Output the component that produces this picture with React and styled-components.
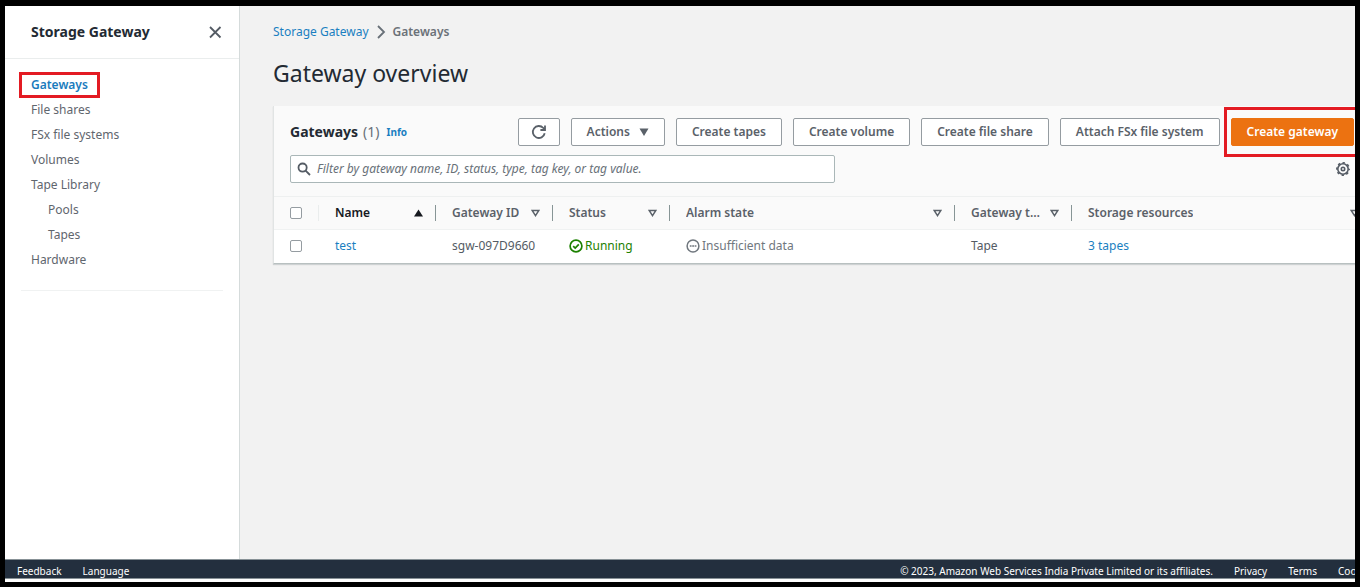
import React from "react";
import styled, { createGlobalStyle, css } from "styled-components";

const GlobalStyle = createGlobalStyle`
  *, *::before, *::after { box-sizing: border-box; }
  body {
    margin: 0;
    background: #000;
    color: #545b64;
    font-family: "Noto Sans", "Open Sans", sans-serif;
    font-size: 12px;
    line-height: 16px;
  }
  button, input { font: inherit; }
`;

const Frame = styled.div`
  min-height: 100vh;
  display: flex;
  flex-direction: column;
  border: 5px solid #000;
  border-top-width: 6px;
  background: #fff;
  overflow: hidden;
`;

const Body = styled.div`
  flex: 1;
  display: flex;
`;

const Sidebar = styled.nav`
  flex: 0 0 235px;
  background: #fff;
  border-right: 1px solid #d5dbdb;
`;

const SidebarHeader = styled.div`
  display: flex;
  align-items: center;
  justify-content: space-between;
  height: 53px;
  padding: 0 17px 0 26px;
  border-bottom: 1px solid #eaeded;
`;

const SidebarTitle = styled.h2`
  margin: 0;
  font-size: 14px;
  line-height: 20px;
  font-weight: 700;
  color: #232a33;
`;

const IconButton = styled.button`
  display: flex;
  padding: 0;
  border: 0;
  background: none;
  color: #545b64;
`;

const NavList = styled.ul`
  margin: 0 16px;
  padding: 13px 10px 18px;
  list-style: none;
  border-bottom: 1px solid #f0f2f2;
`;

const NavItem = styled.li`
  display: flex;
  align-items: center;
  height: 25px;
  padding-left: ${(p) => (p.$nested ? "17px" : "0")};
`;

const marker = css`
  position: relative;
  &::after {
    content: "";
    position: absolute;
    border: 3px solid #e31b23;
    pointer-events: none;
  }
`;

const NavLink = styled.a`
  color: ${(p) => (p.$active ? "#1a7bbd" : "#5f666e")};
  font-weight: ${(p) => (p.$active ? 600 : 400)};
  text-decoration: none;
  ${(p) =>
    p.$active &&
    css`
      ${marker}
      &::after { inset: -5px -12px; }
    `}
`;

const Main = styled.main`
  flex: 1;
  min-width: 0;
  padding: 18px 0 24px 33px;
  background: #f2f2f2;
  overflow: hidden;
`;

const Breadcrumbs = styled.nav`
  display: flex;
  align-items: center;
  gap: 7px;
`;

const Link = styled.a`
  color: #1a7fc1;
  text-decoration: none;
`;

const Current = styled.span`
  font-weight: 600;
  color: #6b7178;
`;

const PageTitle = styled.h1`
  margin: 18px 0 18px;
  font-size: 23px;
  line-height: 30px;
  font-weight: 400;
  color: #232a33;
`;

const Panel = styled.section`
  margin-right: -17px;
  background: #fff;
  border-left: 1px solid #e1e4e4;
  border-bottom: 1px solid #b8c0c0;
  box-shadow: 0 1px 1px rgba(0, 28, 36, 0.15);
`;

const PanelHeader = styled.div`
  padding: 12px 18px 13px 16px;
  background: #fafafa;
  border-bottom: 1px solid #eef0f0;
`;

const TitleRow = styled.div`
  display: flex;
  align-items: center;
  justify-content: space-between;
`;

const PanelTitle = styled.h2`
  display: flex;
  align-items: center;
  gap: 5px;
  margin: 0;
  font-size: 14px;
  line-height: 20px;
  color: #232a33;
`;

const Count = styled.span`
  font-weight: 400;
  color: #687078;
`;

const InfoLink = styled(Link)`
  margin-left: 2px;
  font-size: 10px;
  font-weight: 700;
`;

const Actions = styled.div`
  display: flex;
  gap: 11px;
`;

const Button = styled.button`
  display: flex;
  align-items: center;
  justify-content: center;
  gap: 9px;
  height: 28px;
  padding: 0 ${(p) => (p.$icon ? "12px" : "15px")};
  border: 1px solid ${(p) => (p.$primary ? "#ec7211" : "#959ca1")};
  border-radius: 2px;
  background: ${(p) => (p.$primary ? "#ec7211" : "#fff")};
  color: ${(p) => (p.$primary ? "#fff" : "#5a6169")};
  font-weight: 600;
  white-space: nowrap;
  ${(p) =>
    p.$primary &&
    css`
      ${marker}
      &::after { inset: -12px -24px -12px -8px; }
    `}
`;

const FilterRow = styled.div`
  display: flex;
  align-items: center;
  justify-content: space-between;
  margin-top: 9px;
  padding-right: 4px;
`;

const SearchBox = styled.label`
  display: flex;
  align-items: center;
  gap: 6px;
  flex: 0 1 545px;
  height: 28px;
  padding: 0 6px;
  border: 1px solid #aab7b8;
  border-radius: 2px;
  background: #fff;
  color: #545b64;
`;

const SearchInput = styled.input`
  flex: 1;
  min-width: 0;
  padding: 0;
  border: 0;
  outline: 0;
  background: none;
  &::placeholder {
    color: #687078;
    font-style: italic;
    opacity: 1;
  }
`;

const Table = styled.table`
  width: 100%;
  table-layout: fixed;
  border-collapse: collapse;
  text-align: left;
`;

const Col = styled.col`
  width: ${(p) => p.$width};
`;

const HeadCell = styled.th`
  height: 32px;
  padding: 0;
  background: #fafafa;
  border-bottom: 1px solid #f0f2f2;
  color: ${(p) => (p.$sorted ? "#16191f" : "#5a6169")};
  font-weight: 600;
`;

const HeadContent = styled.div`
  display: flex;
  align-items: center;
  justify-content: space-between;
  height: 16px;
  padding: 0 12px 0 16px;
  border-right: 1px solid ${(p) => (p.$light ? "#eaeded" : p.$last ? "transparent" : "#879596")};
`;

const Label = styled.span`
  overflow: hidden;
  text-overflow: ellipsis;
  white-space: nowrap;
  max-width: ${(p) => (p.$clip ? "72px" : "none")};
`;

const Cell = styled.td`
  height: 34px;
  padding: 0 16px;
  white-space: nowrap;
`;

const Checkbox = styled.input`
  appearance: none;
  display: block;
  width: 12px;
  height: 12px;
  margin: 0;
  border: 1px solid #959ca1;
  border-radius: 2px;
  background: #fff;
`;

const Status = styled.span`
  display: flex;
  align-items: center;
  gap: 2px;
  color: ${(p) => (p.$ok ? "#1d8102" : "#70777e")};
`;

const Footer = styled.footer`
  display: flex;
  align-items: center;
  justify-content: space-between;
  height: 20px;
  margin-bottom: 3px;
  padding: 3px 0 0 12px;
  background: #232f3e;
  border-top: 1px solid #879196;
  border-bottom: 1px solid #879196;
  font-size: 10px;
  white-space: nowrap;
  color: #fff;
`;

const FooterGroup = styled.div`
  display: flex;
  gap: 21px;
  margin-right: ${(p) => (p.$bleed ? "-15px" : "0")};
`;

const FooterLink = styled.a`
  color: #fff;
  text-decoration: none;
`;

const CloseIcon = () => (
  <svg width="14" height="14" viewBox="0 0 14 14" fill="none" stroke="currentColor" strokeWidth="1.8">
    <path d="M2 2l10.5 10.5M12.5 2L2 12.5" />
  </svg>
);
const Chevron = () => (
  <svg width="10" height="14" viewBox="0 0 10 14" fill="none" stroke="#687078" strokeWidth="1.8">
    <path d="M2 1L8 7L2 13" />
  </svg>
);
const RefreshIcon = () => (
  <svg width="16" height="16" viewBox="0 0 16 16" fill="none" stroke="currentColor" strokeWidth="1.8">
    <path d="M13.7 9.2A6 6 0 1 1 12.3 4L14 5.7" />
    <path d="M14 1.5V6H9.4" />
  </svg>
);
const SearchIcon = () => (
  <svg width="14" height="14" viewBox="0 0 14 14" fill="none" stroke="currentColor" strokeWidth="1.8">
    <circle cx="5.6" cy="5.6" r="4.1" />
    <path d="M8.6 8.6L13 13" />
  </svg>
);
const GearIcon = () => (
  <svg width="14" height="14" viewBox="0 0 14 14" fill="none" stroke="currentColor">
    <circle cx="7" cy="7" r="5.2" strokeWidth="1.6" />
    <circle cx="7" cy="7" r="6.2" strokeWidth="1.5" strokeDasharray="2.4 2.47" strokeDashoffset="1.2" />
    <circle cx="7" cy="7" r="1.7" strokeWidth="1.6" />
  </svg>
);
const CaretIcon = () => (
  <svg width="10" height="8" viewBox="0 0 10 8" fill="currentColor">
    <path d="M0.5 0.5h9L5 8z" />
  </svg>
);
const SortIcon = ({ sorted }) => (
  <svg width="9" height="8" viewBox="0 0 9 8" fill="none" stroke="currentColor" strokeWidth="1.4">
    {sorted ? <path d="M4.5 0.5L9 7.5H0z" fill="currentColor" stroke="none" /> : <path d="M1.2 1.5h6.6L4.5 6.6z" />}
  </svg>
);
const CheckIcon = () => (
  <svg width="14" height="14" viewBox="0 0 14 14" fill="none" stroke="currentColor" strokeWidth="1.7">
    <circle cx="7" cy="7" r="5.9" />
    <path d="M4.2 7.1l2 2 3.6-3.8" />
  </svg>
);
const PendingIcon = () => (
  <svg width="14" height="14" viewBox="0 0 14 14" fill="none" stroke="currentColor" strokeWidth="1.5">
    <circle cx="7" cy="7" r="5.9" />
    <path d="M3.8 7h1.8M6.2 7h1.8M8.6 7h1.8" />
  </svg>
);

const navItems = [
  { label: "Gateways", active: true },
  { label: "File shares" },
  { label: "FSx file systems" },
  { label: "Volumes" },
  { label: "Tape Library" },
  { label: "Pools", nested: true },
  { label: "Tapes", nested: true },
  { label: "Hardware" },
];

const columns = [
  { label: "Name", width: "117px", sorted: true },
  { label: "Gateway ID", width: "117px" },
  { label: "Status", width: "117px" },
  { label: "Alarm state", width: "auto" },
  { label: "Gateway type", width: "117px", clip: true },
  { label: "Storage resources", width: "300px", last: true },
];

export default function App() {
  return (
    <>
      <GlobalStyle />
      <Frame>
        <Body>
          <Sidebar aria-label="Storage Gateway">
            <SidebarHeader>
              <SidebarTitle>Storage Gateway</SidebarTitle>
              <IconButton aria-label="Close navigation"><CloseIcon /></IconButton>
            </SidebarHeader>
            <NavList>
              {navItems.map((item) => (
                <NavItem key={item.label} $nested={item.nested}>
                  <NavLink href="#" $active={item.active}>{item.label}</NavLink>
                </NavItem>
              ))}
            </NavList>
          </Sidebar>
          <Main>
            <Breadcrumbs aria-label="Breadcrumbs">
              <Link href="#">Storage Gateway</Link>
              <Chevron />
              <Current>Gateways</Current>
            </Breadcrumbs>
            <PageTitle>Gateway overview</PageTitle>
            <Panel>
              <PanelHeader>
                <TitleRow>
                  <PanelTitle>
                    Gateways <Count>(1)</Count>
                    <InfoLink href="#">Info</InfoLink>
                  </PanelTitle>
                  <Actions>
                    <Button $icon aria-label="Refresh"><RefreshIcon /></Button>
                    <Button>Actions <CaretIcon /></Button>
                    <Button>Create tapes</Button>
                    <Button>Create volume</Button>
                    <Button>Create file share</Button>
                    <Button>Attach FSx file system</Button>
                    <Button $primary>Create gateway</Button>
                  </Actions>
                </TitleRow>
                <FilterRow>
                  <SearchBox>
                    <SearchIcon />
                    <SearchInput
                      type="text"
                      aria-label="Filter gateways"
                      placeholder="Filter by gateway name, ID, status, type, tag key, or tag value."
                    />
                  </SearchBox>
                  <IconButton aria-label="Preferences"><GearIcon /></IconButton>
                </FilterRow>
              </PanelHeader>
              <Table>
                <colgroup>
                  <Col $width="45px" />
                  {columns.map((c) => <Col key={c.label} $width={c.width} />)}
                </colgroup>
                <thead>
                  <tr>
                    <HeadCell>
                      <HeadContent $light><Checkbox type="checkbox" aria-label="Select all gateways" /></HeadContent>
                    </HeadCell>
                    {columns.map((c) => (
                      <HeadCell key={c.label} $sorted={c.sorted}>
                        <HeadContent $last={c.last}>
                          <Label $clip={c.clip}>{c.label}</Label>
                          <SortIcon sorted={c.sorted} />
                        </HeadContent>
                      </HeadCell>
                    ))}
                  </tr>
                </thead>
                <tbody>
                  <tr>
                    <Cell><Checkbox type="checkbox" aria-label="Select test" /></Cell>
                    <Cell><Link href="#">test</Link></Cell>
                    <Cell>sgw-097D9660</Cell>
                    <Cell><Status $ok><CheckIcon />Running</Status></Cell>
                    <Cell><Status><PendingIcon />Insufficient data</Status></Cell>
                    <Cell>Tape</Cell>
                    <Cell><Link href="#">3 tapes</Link></Cell>
                  </tr>
                </tbody>
              </Table>
            </Panel>
          </Main>
        </Body>
        <Footer>
          <FooterGroup>
            <FooterLink href="#">Feedback</FooterLink>
            <FooterLink href="#">Language</FooterLink>
          </FooterGroup>
          <FooterGroup $bleed>
            <span>© 2023, Amazon Web Services India Private Limited or its affiliates.</span>
            <FooterLink href="#">Privacy</FooterLink>
            <FooterLink href="#">Terms</FooterLink>
            <FooterLink href="#">Cookie</FooterLink>
          </FooterGroup>
        </Footer>
      </Frame>
    </>
  );
}
